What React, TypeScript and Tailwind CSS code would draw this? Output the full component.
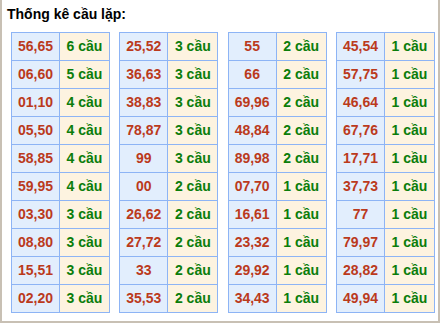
import React from "react";

type Row = [string, number];

const TABLES: Row[][] = [
  [["56,65", 6], ["06,60", 5], ["01,10", 4], ["05,50", 4], ["58,85", 4], ["59,95", 4], ["03,30", 3], ["08,80", 3], ["15,51", 3], ["02,20", 3]],
  [["25,52", 3], ["36,63", 3], ["38,83", 3], ["78,87", 3], ["99", 3], ["00", 2], ["26,62", 2], ["27,72", 2], ["33", 2], ["35,53", 2]],
  [["55", 2], ["66", 2], ["69,96", 2], ["48,84", 2], ["89,98", 2], ["07,70", 1], ["16,61", 1], ["23,32", 1], ["29,92", 1], ["34,43", 1]],
  [["45,54", 1], ["57,75", 1], ["46,64", 1], ["67,76", 1], ["17,71", 1], ["37,73", 1], ["77", 1], ["79,97", 1], ["28,82", 1], ["49,94", 1]],
];

function LoopTable({ rows }: { rows: Row[] }) {
  return (
    <table className="w-[98px] border-collapse border border-[#8db4f5] table-fixed">
      <colgroup>
        <col className="w-[48px]" />
        <col className="w-[50px]" />
      </colgroup>
      <tbody>
        {rows.map(([pair, count]) => (
          <tr key={pair} className="h-[28px]">
            <td className="border border-[#8db4f5] bg-[#e2eefd] text-center text-[#bb3a1c] p-0">{pair}</td>
            <td className="border border-[#8db4f5] bg-[#fdf3e0] text-center text-[#0b7d0b] p-0">{count} cầu</td>
          </tr>
        ))}
      </tbody>
    </table>
  );
}

export default function App() {
  return (
    <div className="w-[440px] h-[323px] bg-white border-x-2 border-b-2 border-[#c8c0b4] font-['Liberation_Sans',Arial,sans-serif] font-bold text-[14px]">
      <div className="pt-[6px] pl-[5px] leading-4 text-black">Thống kê cầu lặp:</div>
      <div className="mt-[10px] pl-[9px] pr-[3px] flex justify-between">
        {TABLES.map((rows, i) => (
          <LoopTable key={i} rows={rows} />
        ))}
      </div>
    </div>
  );
}
